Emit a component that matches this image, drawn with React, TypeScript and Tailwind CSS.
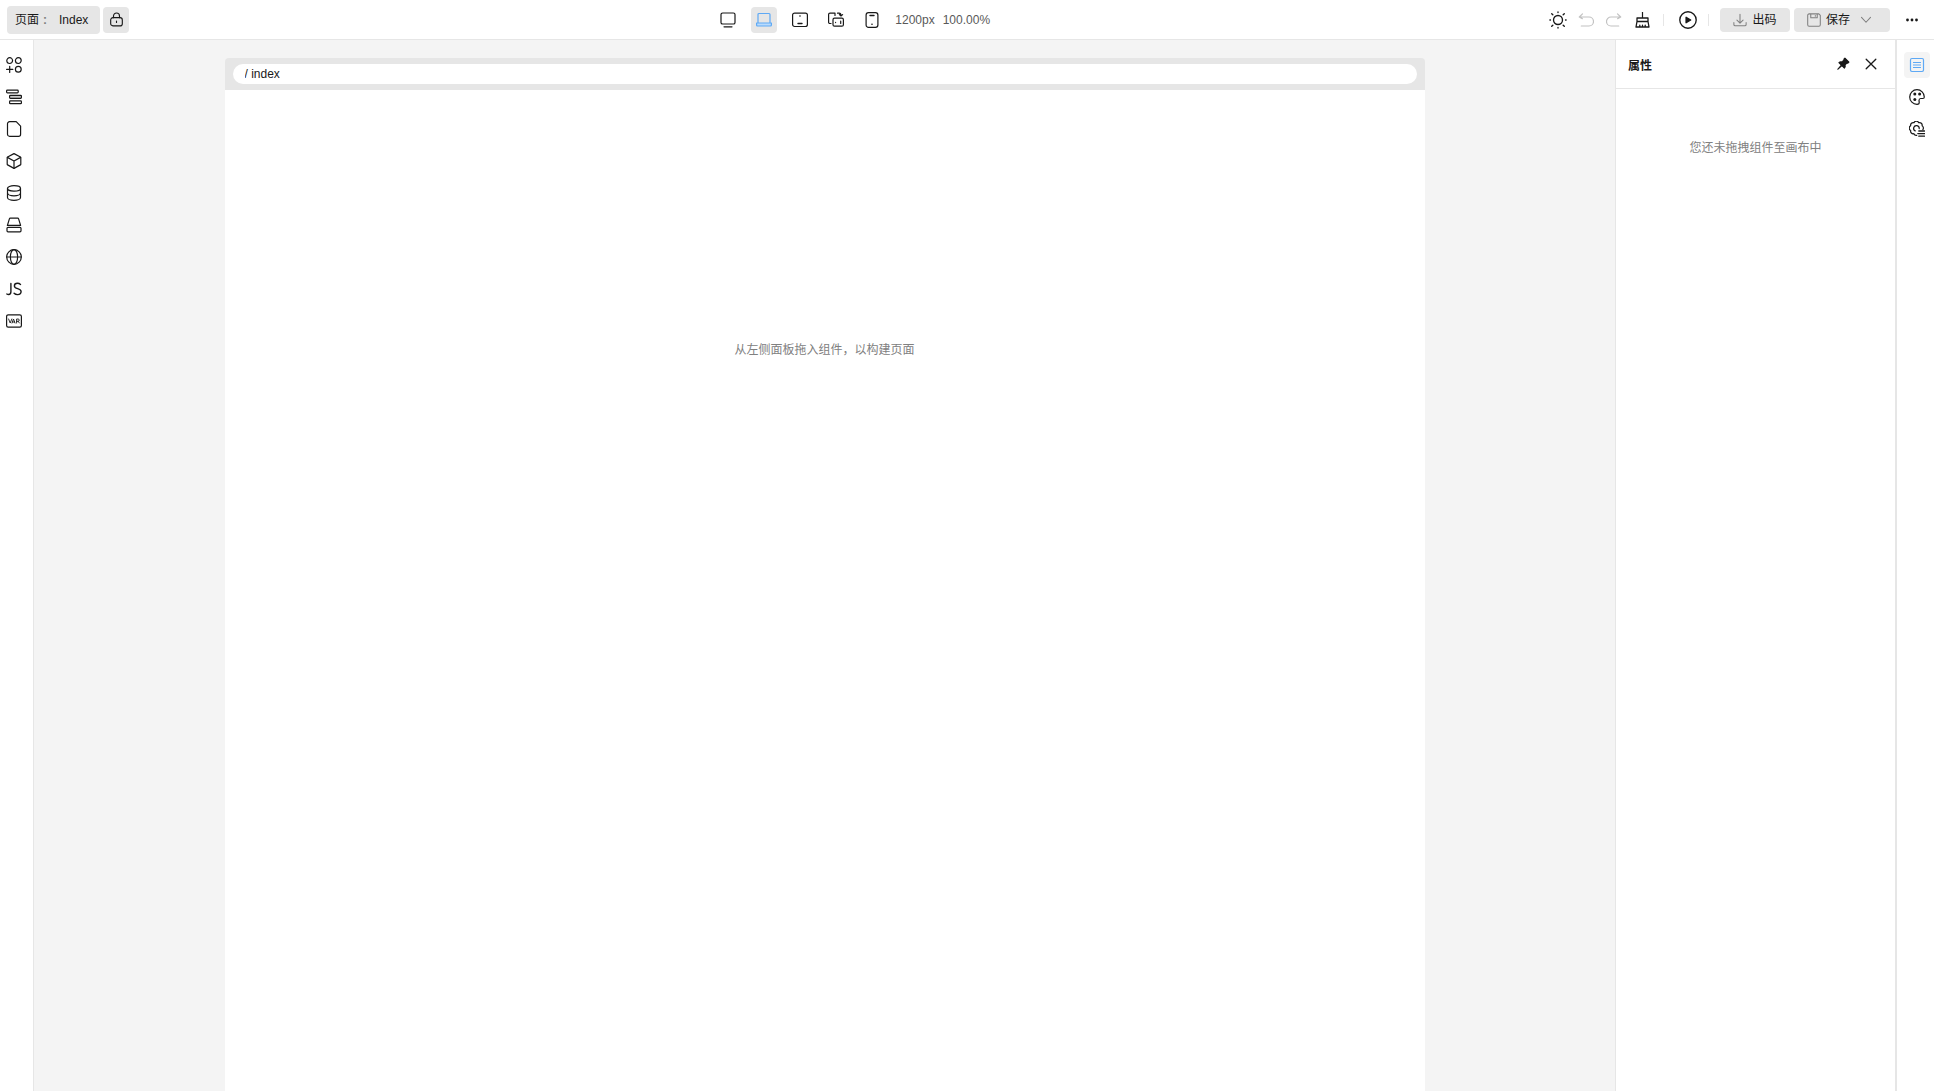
import type { ReactNode } from "react";

function Icon({ children, size = "size-4" }: { children: ReactNode; size?: string }) {
  return (
    <svg
      viewBox="0 0 16 16"
      className={`${size} shrink-0`}
      fill="none"
      stroke="currentColor"
      strokeWidth="1.2"
      strokeLinecap="round"
      strokeLinejoin="round"
      aria-hidden="true"
    >
      {children}
    </svg>
  );
}

function Tool({ label, className = "", children }: { label: string; className?: string; children: ReactNode }) {
  return (
    <button type="button" aria-label={label} className={`flex shrink-0 items-center justify-center rounded ${className}`}>
      {children}
    </button>
  );
}

const devices = [
  {
    label: "桌面",
    active: false,
    icon: (
      <>
        <rect x="1" y="1" width="14" height="11" rx="1.6" />
        <path d="M4 14.800h8" />
      </>
    ),
  },
  {
    label: "笔记本",
    active: true,
    icon: (
      <>
        <path d="M2 11V2.500a1 1 0 0 1 1-1h10a1 1 0 0 1 1 1V11" />
        <path d="M.6 11h14.8v2a1 1 0 0 1-1 1H1.600a1 1 0 0 1-1-1z" fill="#b9dbfd" />
      </>
    ),
  },
  {
    label: "平板",
    active: false,
    icon: (
      <>
        <rect x=".6" y="1.100" width="14.8" height="13.4" rx="2" />
        <path d="M7.900 4h.2M6 11.500h4" strokeWidth="1.400" />
      </>
    ),
  },
  {
    label: "横屏手机",
    active: false,
    icon: (
      <>
        <path d="M3 11.500H1.800A1.200 1.200 0 0 1 .6 10.300V2.600A1.400 1.400 0 0 1 2 1.200h5v2.300" />
        <path d="M9.500 1.200h1.500q2 0 2 2.600M11.400 2.600l1.600 1.400L14.600 2.600" />
        <rect x="5" y="6.200" width="10.400" height="8" rx="1.500" />
        <path d="M7.600 10.400v.200M12.700 9.200v2.200" />
      </>
    ),
  },
  {
    label: "手机",
    active: false,
    icon: (
      <>
        <rect x="2.100" y=".6" width="11.800" height="14.800" rx="2.400" />
        <path d="M6 3.500h4M7.900 12.300h.200" strokeWidth="1.400" />
      </>
    ),
  },
];

const plugins = [
  {
    label: "组件",
    icon: (
      <>
        <circle cx="3.700" cy="3.600" r="2.900" />
        <circle cx="12.300" cy="3.600" r="2.900" />
        <circle cx="12.300" cy="12.200" r="2.900" />
        <path d="M.6 12.400h6.200M3.700 9.300v6.200" />
      </>
    ),
  },
  {
    label: "大纲",
    icon: (
      <>
        <rect x=".6" y="1.200" width="11.600" height="2.600" rx=".8" />
        <rect x="3.600" y="6.300" width="11.800" height="3" rx=".8" fill="#c9c9c9" />
        <rect x="3.600" y="11.900" width="11.800" height="2.800" rx=".8" />
      </>
    ),
  },
  {
    label: "页面",
    icon: <path d="M3.600.7h6.600l4.400 4.400v8.100a2.100 2.100 0 0 1-2.100 2.100H3.600a2.100 2.100 0 0 1-2.100-2.100V2.800A2.100 2.100 0 0 1 3.600.7z" />,
  },
  {
    label: "区块",
    icon: (
      <>
        <path d="M8 .6 14.400 4a.8.800 0 0 1 .4.700v6.500a.8.800 0 0 1-.4.700L8 15.400l-6.400-3.500a.8.800 0 0 1-.4-.7V4.700a.8.800 0 0 1 .4-.7z" />
        <path d="m1.400 4.400 6.600 3.600 6.600-3.600M8 8v7.300" />
      </>
    ),
  },
  {
    label: "数据源",
    icon: (
      <>
        <ellipse cx="8" cy="3.400" rx="6.500" ry="2.700" />
        <path d="M1.500 3.400v9.200c0 1.500 2.900 2.800 6.500 2.800s6.500-1.300 6.500-2.800V3.400" />
        <path d="M1.500 8c0 1.500 2.900 2.800 6.500 2.800s6.500-1.300 6.500-2.800" />
      </>
    ),
  },
  {
    label: "资源",
    icon: (
      <>
        <path d="M4.400 1.200h7.200a1 1 0 0 1 1 .7l2 6.500H1.400l2-6.500a1 1 0 0 1 1-.7z" />
        <rect x="1" y="10.300" width="14" height="4.500" rx="1" />
      </>
    ),
  },
  {
    label: "国际化",
    icon: (
      <>
        <circle cx="8" cy="8" r="7.300" />
        <ellipse cx="8" cy="8" rx="3.600" ry="7.300" />
        <path d="M.7 8h14.600" />
      </>
    ),
  },
  {
    label: "JS",
    icon: (
      <path
        d="M4.900 2.400v8.400q0 2.700-2.300 2.700-.9 0-1.800-.5M14.500 3.400C13.600 2.600 12.500 2.300 11.500 2.300 9.600 2.300 8.400 3.400 8.400 4.900c0 3.600 6.700 1.900 6.700 5.700 0 1.800-1.500 3-3.500 3-1.300 0-2.600-.4-3.500-1.300"
        strokeWidth="1.400"
      />
    ),
  },
  {
    label: "变量",
    icon: (
      <>
        <rect x=".6" y="1.800" width="14.800" height="12.400" rx="1.600" />
        <path d="m2.600 6 1.600 4L5.800 6M6 10l1.500-4L9 10M6.500 9h2M10.600 10V6h1.500a1.100 1.100 0 0 1 0 2.300h-1.500M12 8.300l1.400 1.700" strokeWidth=".9" />
      </>
    ),
  },
];

const settings = [
  {
    label: "属性",
    active: true,
    icon: (
      <>
        <rect x="1.500" y="1.500" width="13" height="13" rx="1.400" />
        <path d="M4.400 5.500h7.200M4.400 8h7.200M4.400 10.500h7.200" strokeWidth="1" />
      </>
    ),
  },
  {
    label: "样式",
    active: false,
    icon: (
      <>
        <path d="M15.300 8A7.300 7.300 0 1 0 8 15.300c1.900 0 2.300-.8 2.200-1.900l-.2-2c0-1.300.6-1.900 1.700-1.900h2.200c.9 0 1.400-.4 1.400-1.500z" />
        <g fill="currentColor" stroke="none">
          <circle cx="5.800" cy="5" r="1.500" />
          <circle cx="10.600" cy="5" r="1.500" />
          <circle cx="5.800" cy="10.400" r="1.500" />
        </g>
      </>
    ),
  },
  {
    label: "高级",
    active: false,
    icon: (
      <>
        <path d="M7.800 14.300A2.600 2.600 0 0 1 4.900 12.700 2.600 2.600 0 0 1 1.700 9.500 2.600 2.600 0 0 1 1.700 4.800 2.600 2.600 0 0 1 5 1.700 2.600 2.600 0 0 1 9.700 1.700 2.600 2.600 0 0 1 13.100 4.800 2.600 2.600 0 0 1 13.900 8.600" />
        <path d="M6.200 9.900a2.800 2.800 0 1 1 4-2.300" />
        <path d="M9.800 10h5.800M8.800 12.600h6.800M9.800 15.200h5.800" strokeWidth="1.300" />
      </>
    ),
  },
];

export default function App() {
  return (
    <div className="flex h-screen flex-col overflow-hidden bg-white font-['Liberation_Sans','Noto_Sans_CJK_SC',sans-serif] text-xs text-[#191919]">
      <header className="flex h-10 shrink-0 items-center justify-between border-b border-[#e6e6e6] pl-[7px] pr-2">
        <div className="flex items-center gap-[3px]">
          <button type="button" className="flex h-7 items-center gap-3 rounded bg-[#e6e6e6] pl-2 pr-3">
            <span className="flex w-8 whitespace-nowrap">
              页面<span className="ml-1 font-bold text-[#808080]">:</span>
            </span>
            <span>Index</span>
          </button>
          <Tool label="锁定" className="size-[26px] bg-[#e6e6e6]">
            <Icon size="size-[15px]">
              <rect x="1.800" y="6" width="12.400" height="8.800" rx="2.400" />
              <path d="M4.800 6V4.200a3.200 3.200 0 0 1 6.400 0V6M8 9.600v1.600" />
            </Icon>
          </Tool>
        </div>

        <div className="ml-8 flex items-center gap-[10px]">
          {devices.map((d) => (
            <Tool key={d.label} label={d.label} className={d.active ? "size-[26px] bg-[#e6e6e6] text-[#5ea9f5]" : "size-[26px]"}>
              <Icon>{d.icon}</Icon>
            </Tool>
          ))}
          <div className="flex gap-2 text-[#595959]">
            <span>1200px</span>
            <span>100.00%</span>
          </div>
        </div>

        <div className="flex items-center">
          <Tool label="主题" className="size-7">
            <Icon size="size-[18px]">
              <circle cx="8" cy="8" r="4" />
              <path d="M8 .8v.5M8 14.700v.5M.8 8h.5M14.700 8h.5M2.400 2.400l1 1M12.600 12.600l1 1M2.400 13.600l1-1M12.600 3.400l1-1" />
            </Icon>
          </Tool>
          <Tool label="撤销" className="size-7 text-[#c2c2c2]">
            <Icon>
              <path d="M4.500 1.800 1.300 5h9.700a4.500 4.500 0 0 1 0 9H3.300M1.300 5l3 1.600" />
            </Icon>
          </Tool>
          <Tool label="重做" className="size-7 text-[#c2c2c2]">
            <Icon>
              <path d="M11.500 1.800 14.700 5H5a4.500 4.500 0 0 0 0 9h7.700M14.700 5l-3 1.600" />
            </Icon>
          </Tool>
          <Tool label="清空" className="size-7">
            <Icon>
              <path d="M8.500.5v5" />
              <path d="M3 6h11v3.500H3zM3 9.500 2 15h13l-1-5.500M5.800 15v-1.800M8.500 15v-1.800M11.200 15v-1.800" strokeWidth="1.300" />
            </Icon>
          </Tool>
          <span className="ml-[7px] h-3 w-px bg-[#e6e6e6]" />
          <Tool label="预览" className="ml-[10px] size-7">
            <Icon size="size-[18px]">
              <circle cx="8" cy="8" r="7.300" />
              <path d="M6.300 5.600v4.800L10.400 8z" fill="currentColor" />
            </Icon>
          </Tool>
          <span className="ml-[6px] h-3 w-px bg-[#e6e6e6]" />
          <button type="button" className="ml-[11px] flex h-6 w-[70px] items-center justify-center gap-[5px] rounded bg-[#e6e6e6]">
            <span className="text-[#808080]">
              <Icon size="size-[14px]">
                <path d="M8 1.500v10M4.500 8.200 8 11.600l3.500-3.400M1 11v2A1.500 1.500 0 0 0 2.500 14.500h11A1.500 1.500 0 0 0 15 13v-2" />
              </Icon>
            </span>
            出码
          </button>
          <div className="ml-1 flex h-6 w-24 items-center rounded bg-[#e6e6e6] pl-[13px]">
            <button type="button" className="flex items-center gap-[5px]">
              <span className="text-[#808080]">
                <Icon size="size-[14px]">
                  <path d="M2.500 1h11L15.200 2.800v10.700a1.600 1.600 0 0 1-1.600 1.600H2.400A1.600 1.600 0 0 1 .8 13.500V2.600A1.600 1.600 0 0 1 2.400 1zM4.300 1v4.500h7.400V1M9.500 2.800v.8" />
                </Icon>
              </span>
              保存
            </button>
            <Tool label="保存选项" className="ml-2 size-4 text-[#808080]">
              <Icon size="size-3">
                <path d="M2 4.500 8 11l6-6.500" strokeWidth="1.400" />
              </Icon>
            </Tool>
          </div>
          <Tool label="更多" className="ml-2 size-7">
            <Icon>
              <g fill="currentColor" stroke="none">
                <circle cx="3.500" cy="8" r="1.400" />
                <circle cx="8" cy="8" r="1.400" />
                <circle cx="12.500" cy="8" r="1.400" />
              </g>
            </Icon>
          </Tool>
        </div>
      </header>

      <div className="flex min-h-0 flex-1">
        <nav className="flex w-[34px] shrink-0 flex-col gap-1.5 border-r border-[#e6e6e6] pl-px pt-3">
          {plugins.map((p) => (
            <Tool key={p.label} label={p.label} className="size-[26px]">
              <Icon>{p.icon}</Icon>
            </Tool>
          ))}
        </nav>

        <main className="flex min-w-0 flex-1 justify-center bg-[#f4f4f4] pt-[18px]">
          <div className="flex w-full max-w-[1200px] flex-col">
            <div className="flex h-8 shrink-0 items-center rounded-t bg-[#e6e6e6] px-2">
              <input aria-label="页面路由" readOnly value="/ index" className="h-5 w-full rounded-full bg-white px-3 outline-none" />
            </div>
            <div className="flex-1 bg-white pt-[252px] text-center text-[#808080]">从左侧面板拖入组件，以构建页面</div>
          </div>
        </main>

        <aside className="flex w-[281px] shrink-0 flex-col border-x border-[#e6e6e6]">
          <div className="flex h-[49px] items-center border-b border-[#e6e6e6] px-3">
            <h2 className="flex-1 pt-1 font-bold">属性</h2>
            <Tool label="固定" className="size-6">
              <Icon size="size-[14px]">
                <path d="M10.200 1.200 14.800 5.800 13.600 7l-.9-.2-2.300 2.300c.4 1.500.2 2.600-.8 3.600L6.700 9.900 2 14l4.100-4.700-2.800-2.900c1-1 2.100-1.200 3.600-.8l2.300-2.300L9 2.400z" fill="currentColor" />
              </Icon>
            </Tool>
            <Tool label="关闭" className="ml-1 size-6">
              <Icon size="size-[14px]">
                <path d="m2.500 2.500 11 11M13.500 2.500l-11 11" strokeWidth="1.500" />
              </Icon>
            </Tool>
          </div>
          <p className="pt-[51px] text-center text-[#808080]">您还未拖拽组件至画布中</p>
        </aside>

        <nav className="flex w-[38px] shrink-0 flex-col gap-1.5 border-l border-[#e6e6e6] pl-[7px] pt-3">
          {settings.map((s) => (
            <Tool key={s.label} label={s.label} className={s.active ? "size-[26px] bg-[#f4f4f4] text-[#5ea9f5]" : "size-[26px]"}>
              <Icon>{s.icon}</Icon>
            </Tool>
          ))}
        </nav>
      </div>
    </div>
  );
}
